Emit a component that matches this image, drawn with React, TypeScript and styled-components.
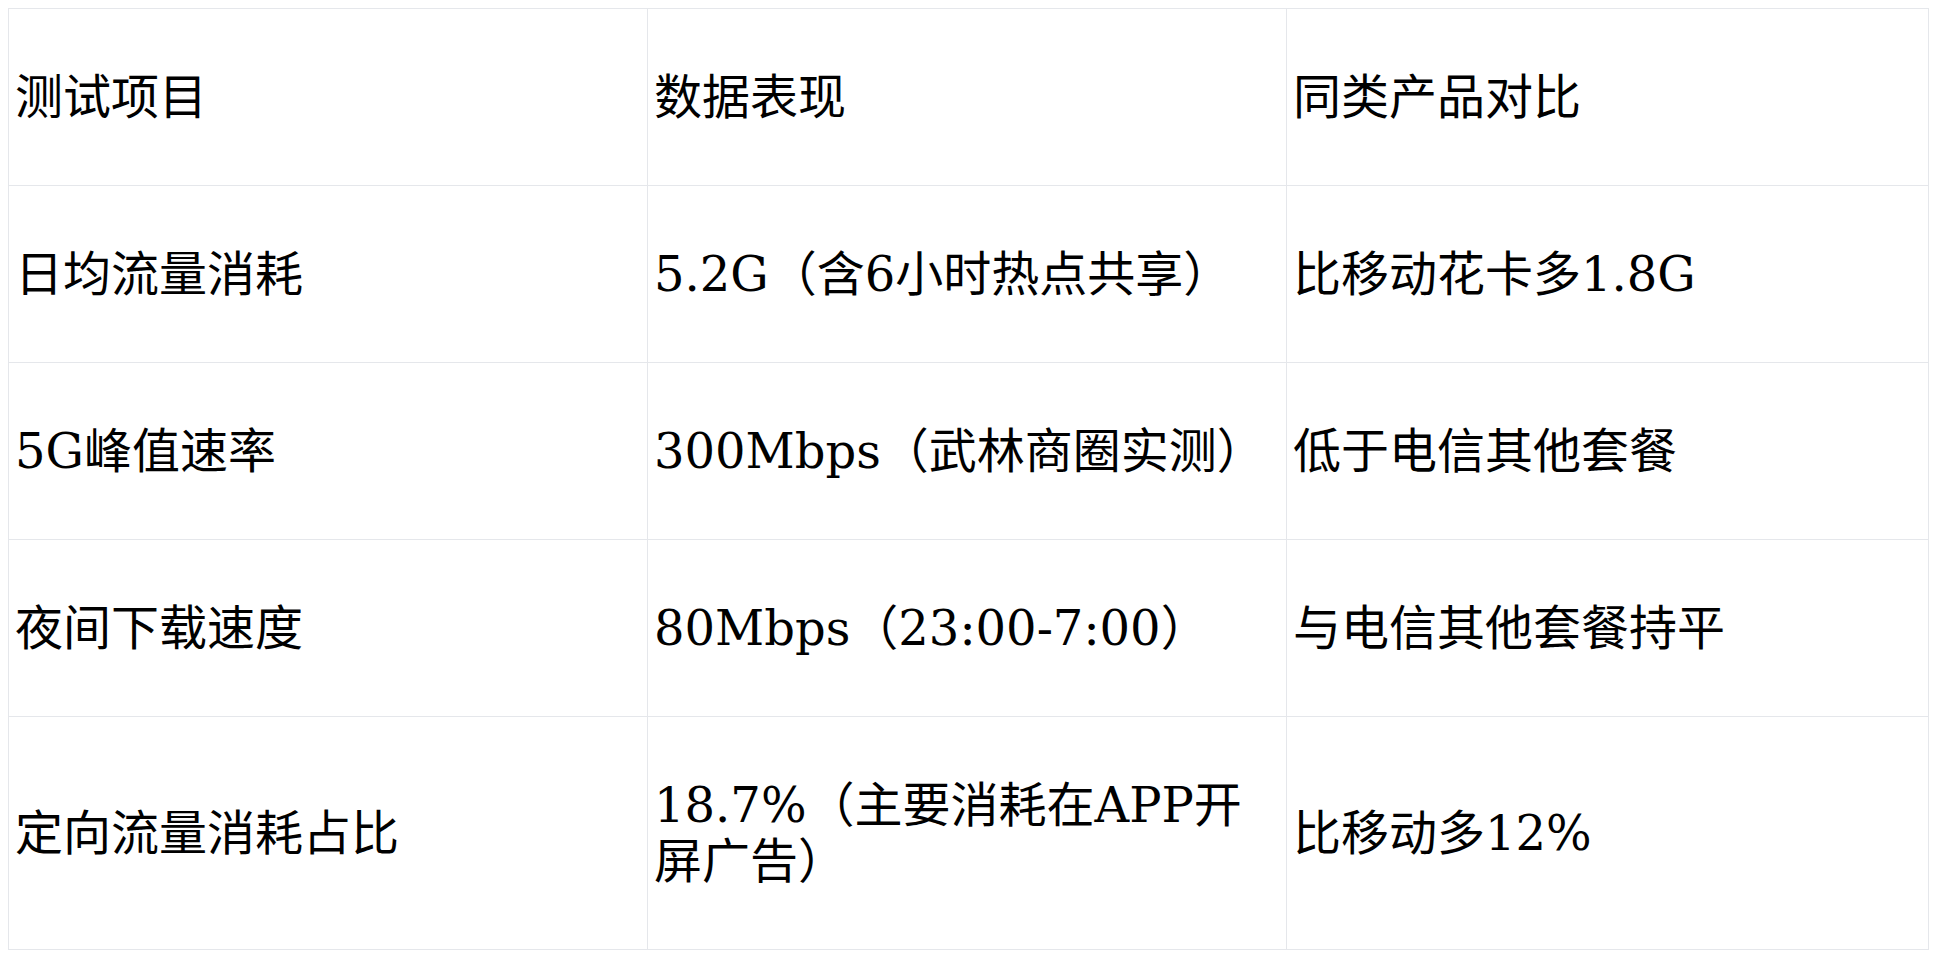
import React from "react";
import styled, { createGlobalStyle } from "styled-components";

const GlobalStyle = createGlobalStyle`
  html, body {
    margin: 0;
    padding: 0;
    background: #ffffff;
  }
  body {
    margin: 8px;
    font-family: "DejaVu Serif", "Noto Sans CJK SC", serif;
    color: #000000;
  }
`;

const Table = styled.table`
  width: calc(100% - 3px);
  table-layout: fixed;
  border-collapse: collapse;
  font-family: "DejaVu Serif", "Noto Sans CJK SC", serif;
  font-size: 48px;
  line-height: 56px;
  color: #000000;
`;

const Col = styled.col<{ $w?: string }>`
  width: ${(p) => p.$w ?? "auto"};
`;

const Cell = styled.td`
  border: 1px solid #e5e7eb;
  padding: 60px 6px;
  vertical-align: middle;
  text-align: left;
  font-weight: normal;
`;

const HeadCell = styled(Cell).attrs({ as: "th" })``;

const headers = ["测试项目", "数据表现", "同类产品对比"];

const rows: string[][] = [
  ["日均流量消耗", "5.2G（含6小时热点共享）", "比移动花卡多1.8G"],
  ["5G峰值速率", "300Mbps（武林商圈实测）", "低于电信其他套餐"],
  ["夜间下载速度", "80Mbps（23:00-7:00）", "与电信其他套餐持平"],
  ["定向流量消耗占比", "18.7%（主要消耗在APP开屏广告）", "比移动多12%"],
];

export default function App() {
  return (
    <>
      <GlobalStyle />
      <Table>
        <colgroup>
          <Col $w="639px" />
          <Col $w="639px" />
          <Col />
        </colgroup>
        <thead>
          <tr>
            {headers.map((h) => (
              <HeadCell key={h}>{h}</HeadCell>
            ))}
          </tr>
        </thead>
        <tbody>
          {rows.map((r) => (
            <tr key={r[0]}>
              {r.map((c, i) => (
                <Cell key={i}>{c}</Cell>
              ))}
            </tr>
          ))}
        </tbody>
      </Table>
    </>
  );
}
